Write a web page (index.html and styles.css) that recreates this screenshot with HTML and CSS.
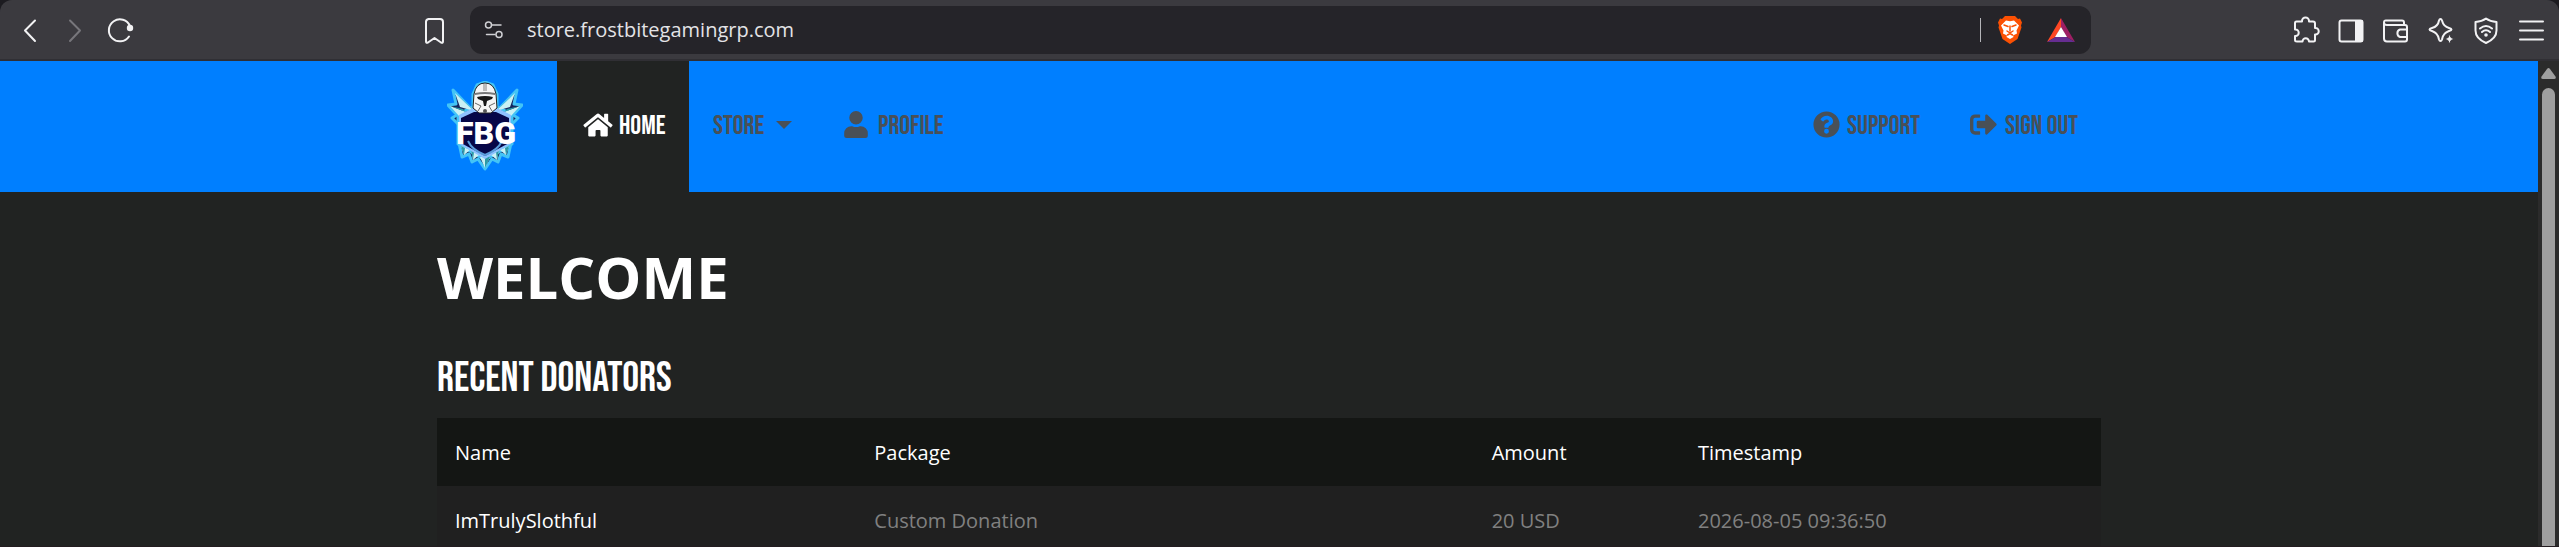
FILE: index.html
```html
<!DOCTYPE html>
<html lang="en">
<head>
<meta charset="utf-8">
<title>Frostbite Gaming Store</title>
<link rel="stylesheet" href="styles.css">
</head>
<body>
<div class="window">
<div class="toolbar">
  <div class="tools tools-left">
    <button class="tool" aria-label="Back"><svg width="28" height="28" viewBox="0 0 28 28"><path d="M19 4.500L9 14.500l10 10.500"/></svg></button>
    <button class="tool dim" aria-label="Forward"><svg width="28" height="28" viewBox="0 0 28 28"><path d="M9 4.500L19 14.500 9 25"/></svg></button>
    <button class="tool" aria-label="Reload"><svg width="28" height="28" viewBox="0 0 28 28"><path d="M23 20.500A11 11 0 1 1 24 10"/><circle cx="24" cy="12" r="3.200" fill="currentColor" stroke="none"/></svg></button>
  </div>
  <button class="tool bookmark" aria-label="Bookmark"><svg width="28" height="28" viewBox="0 0 28 28"><path d="M8.500 3H20a3 3 0 0 1 3 3v19.500q0 2-2 1l-6.500-4.500L8 26.500q-2 1-2-1V6a3 3 0 0 1 2.500-3z"/></svg></button>
  <div class="address">
    <button class="tool site" aria-label="Site settings"><svg width="20" height="20" viewBox="0 0 20 20"><circle cx="4.500" cy="5" r="3"/><path d="M8 5h9M2.500 14.500H11"/><circle cx="15" cy="14.500" r="3"/></svg></button>
    <input class="url" type="text" aria-label="Address" value="store.frostbitegamingrp.com">
    <span class="divider"></span>
    <button class="tool shield" aria-label="Shields"><svg width="24" height="28" viewBox="0 0 24 28"><path d="M7 0h10l3 3 2-.5 2 4-1 3 .5 2-4 11.500L12 28l-7.500-5L.5 11.500 1 9.500 0 6.500l2-4L4 3z" fill="#fb5003" stroke="none"/><path d="M8 4.500l4 .8 4-.8 5 5-2.500 5 .5 3-4 2 .5 1.500L12 23l-3.500-2 .5-1.500-4-2 .5-3L3 9.500z" fill="#fff" stroke="none"/><path d="M6 9l4 1.500M18 9l-4 1.500M12 10v5M9 15l3 2 3-2M9.500 19l2.500-1.500 2.500 1.500" stroke="#fb5003" stroke-width="1.500"/></svg></button>
    <button class="tool rewards" aria-label="Rewards"><svg width="28" height="24" viewBox="0 0 28 24"><g stroke="none"><path d="M14 0L0 24l8.500-5L14 9z" fill="#ff4724"/><path d="M14 0l14 24-8.500-5L14 9z" fill="#9e1f63"/><path d="M0 24h28l-8.500-5h-11z" fill="#662d91"/><path d="M14 9l6 10H8z" fill="#fff"/></g></svg></button>
  </div>
  <div class="tools tools-right">
    <button class="tool" aria-label="Extensions"><svg width="28" height="28" viewBox="0 0 28 28"><path d="M3 7q0-1.500 1.500-1.500H10V5a3.500 3.500 0 0 1 7 0v.5h4q2 0 2 2V12h.500a3.200 3.200 0 0 1 0 6.500H23V24q0 1.500-1.500 1.500H17a3.200 3.200 0 0 0-6.500 0H5Q3 25.500 3 24v-4h.5a3.200 3.200 0 0 0 0-6.500H3z"/></svg></button>
    <button class="tool" aria-label="Sidebar"><svg width="28" height="28" viewBox="0 0 28 28"><rect x="2.500" y="4.500" width="23" height="21" rx="2"/><path d="M19 5h6v20h-6z" fill="currentColor"/></svg></button>
    <button class="tool" aria-label="Wallet"><svg width="28" height="28" viewBox="0 0 28 28"><path d="M2 6.500v16q0 3 3 3h18q2 0 2-2V11q0-2-2-2H5Q2 9 2 6.500T4.500 4.500H20q2 0 2 2V9M25 13.500h-7a4 4 0 0 0 0 7.500h7"/></svg></button>
    <button class="tool" aria-label="Assistant"><svg width="28" height="28" viewBox="0 0 28 28"><path d="M13.500 3q1 0 1.500 1.500Q16.500 10.500 22 12q2.500.700 2.500 1.500T22 15q-6 2-7 8.500Q14.500 25 13.500 25T12 23.500Q11 17 5 15q-2.500-.700-2.500-1.500T5 12q6-1.500 7-7.500Q12.500 3 13.500 3z"/><path d="M22.500 18l1.500 3.500 3.500 1.500-3.500 1.500-1.500 3.500-1.500-3.500-3.500-1.500 3.500-1.500z" fill="currentColor" stroke="#3b3a3f" stroke-width="1"/></svg></button>
    <button class="tool" aria-label="VPN"><svg width="28" height="28" viewBox="0 0 28 28"><path d="M14 2.500q4 3 10.500 3.500v8.500q0 8-10.500 12.500Q3.500 22.500 3.500 14.500V6Q10 5.500 14 2.500zM8 12.500q6-5 12 0M10 16q4-3.500 8 0"/><circle cx="14" cy="19" r="1.800" fill="currentColor" stroke="none"/></svg></button>
    <button class="tool" aria-label="Menu"><svg width="28" height="28" viewBox="0 0 28 28"><path d="M3 5.500h23M3 14.500h23M3 23.500h23"/></svg></button>
  </div>
</div>
<div class="viewport">
<div class="page">
  <header class="header">
    <nav class="container nav">
      <a class="brand" href="#" aria-label="FBG">
        <svg width="76" height="90" viewBox="0 0 76 90">
          <g stroke="#43c4f6" stroke-width="3" stroke-linejoin="round" fill="#14265e"><path d="M28 32L6 9l3 14-8 1 9 10-5 3 8 8 16-4zM48 32L70 9l-3 14 8 1-9 10 5 3-8 8-16-4zM12 62l3 14 7-3 3 8 6-3 7 10 7-10 6 3 3-8 7 3 3-14z"/><path d="M38 1l8 3 4 9v18H26V13l4-9zM11 33l15-7h24l15 7v30L38 79 11 63z"/></g>
          <path d="M27 30L8 12l5 14zM19 31L3 25l9 10zM49 30L68 12l-5 14zM57 31l16-6-9 10zM14 65l3 9 6-5zM24 69l2 10 6-5zM33 76l5 11 5-11zM62 65l-3 9-6-5zM52 69l-2 10-6-5z" fill="#c9f1f4"/>
          <path d="M27 30L8 12l13 12zM19 31L3 25l13 3zM49 30L68 12 55 24zM57 31l16-6-13 3zM14 65l3 9 1-7zM24 69l2 10 1-8zM38 76v11l5-11zM62 65l-3 9-1-7zM52 69l-2 10-1-8z" fill="#2b9aa6"/>
          <path d="M12 34l14-7h24l14 7v29L38 78 12 63z" fill="#8ec2ff"/>
          <path d="M14 37l13-6h22l13 6v25L38 75 14 62z" fill="#070747"/>
          <path d="M21 60q4 9 17 14 13-5 17-14" fill="none" stroke="#5b9edc" stroke-width="2"/>
          <path d="M27 13Q29 2 38 2t11 11l1 14-6 5H32l-6-5z" fill="#f5f5f5" stroke="#222" stroke-width="1"/>
          <path d="M36 3h4v7h-4z" fill="#bbb"/>
          <path d="M28 12q10-2 20 0v2q-10-2-20 0z" fill="#777"/>
          <path d="M30 16q8-2 16 0l-1 2-5 2-1 5h-2l-1-5-5-2z" fill="#171717"/>
          <path d="M28 22l6 3-3 5M48 22l-6 3 3 5" fill="none" stroke="#666"/><circle cx="38" cy="30" r="2" fill="#555"/>
          <text x="39" y="63" class="brand-text" text-anchor="middle">FBG</text>
        </svg>
      </a>
      <a class="link active" href="#"><svg width="30" height="26" viewBox="0 0 576 512"><path d="M280 148L96 300v164a16 16 0 0 0 16 16h112a16 16 0 0 0 16-16v-96a16 16 0 0 1 16-16h64a16 16 0 0 1 16 16v96a16 16 0 0 0 16 16h112a16 16 0 0 0 16-16V300L296 148a12 12 0 0 0-16 0zM572 251l-84-69V44a12 12 0 0 0-12-12h-56a12 12 0 0 0-12 12v72l-89-74a48 48 0 0 0-61 0L4 251a12 12 0 0 0-2 17l26 31a12 12 0 0 0 17 2l235-194a12 12 0 0 1 15 0l235 194a12 12 0 0 0 17-2l26-31a12 12 0 0 0-1-17z"/></svg><span>Home</span></a>
      <a class="link store" href="#"><span>Store</span><i class="caret"></i></a>
      <a class="link profile" href="#"><svg width="24" height="27" viewBox="0 0 448 512"><path d="M224 256a128 128 0 1 0 0-256 128 128 0 0 0 0 256zm90 32h-17a174 174 0 0 1-146 0h-17A134 134 0 0 0 0 422v42a48 48 0 0 0 48 48h352a48 48 0 0 0 48-48v-42a134 134 0 0 0-134-134z"/></svg><span>Profile</span></a>
      <a class="link support" href="#"><svg width="27" height="27" viewBox="0 0 512 512"><path fill-rule="evenodd" d="M504 256a248 248 0 1 1-496 0 248 248 0 0 1 496 0zM262 90c-54 0-89 23-116 64a12 12 0 0 0 3 16l34 26a12 12 0 0 0 17-2c18-22 30-35 57-35 20 0 45 13 45 33 0 15-12 22-32 33-24 14-55 30-55 72v7a12 12 0 0 0 12 12h57a12 12 0 0 0 12-12v-4c0-29 85-30 85-108 0-59-61-102-119-102zm-6 248a46 46 0 1 0 0 92 46 46 0 0 0 0-92z"/></svg><span>Support</span></a>
      <a class="link signout" href="#"><svg width="27" height="27" viewBox="0 0 512 512"><path d="M497 273L329 441c-15 15-41 4.500-41-17v-96H152a24 24 0 0 1-24-24v-96a24 24 0 0 1 24-24h136V88c0-21 26-32 41-17l168 168a24 24 0 0 1 0 34zM192 436v-40a12 12 0 0 0-12-12H96a32 32 0 0 1-32-32V160a32 32 0 0 1 32-32h84a12 12 0 0 0 12-12V76a12 12 0 0 0-12-12H96a96 96 0 0 0-96 96v192a96 96 0 0 0 96 96h84a12 12 0 0 0 12-12z"/></svg><span>Sign out</span></a>
    </nav>
  </header>
  <main class="container">
    <h1 class="title">WELCOME</h1>
    <h2 class="subtitle">Recent Donators</h2>
    <table class="donators">
      <thead><tr><th class="c-name">Name</th><th class="c-package">Package</th><th class="c-amount">Amount</th><th>Timestamp</th></tr></thead>
      <tbody><tr><td class="name">ImTrulySlothful</td><td>Custom Donation</td><td>20 USD</td><td>2026-08-05 09:36:50</td></tr></tbody>
    </table>
  </main>
</div>
<div class="scrollbar"><svg width="15" height="11" viewBox="0 0 15 11"><path d="M6 1q1.500-2 3 0l5.500 7.500Q15.500 11 13 11H2Q-.5 11 .5 8.500z"/></svg><div class="thumb"></div></div>
</div>
</div>
</body>
</html>
```
FILE: styles.css
```css
* { box-sizing: border-box; }
body { margin: 0; background: #212322; color: #fff; font-family: "Segoe UI", "Open Sans", "Noto Sans", sans-serif; }
.window { display: flex; flex-direction: column; height: 100vh; overflow: hidden; background: #1c1b20; border-bottom: 1px solid #231c20; }
.toolbar { display: flex; align-items: center; flex: none; height: 61px; padding: 0 14px 0 16px; background: #3b3a3f; border-bottom: 2px solid #302f34; border-radius: 12px 12px 0 0; color: #f2f2f4; }
.tool { display: block; flex: none; padding: 0; border: 0; background: none; color: inherit; line-height: 0; }
.tool svg { fill: none; stroke: currentColor; stroke-width: 2; stroke-linecap: round; stroke-linejoin: round; }
.dim { color: #77767b; }
.tools { display: flex; align-items: center; gap: 17px; }
.tools-left { width: 404px; }
.bookmark { margin-right: 22px; }
.address { display: flex; align-items: center; flex: none; width: 64.1%; max-width: 1621px; height: 48px; padding: 0 16px 0 14px; border-radius: 12px; background: #252429; color: #d0d0d4; }
.site { margin-right: 23px; }
.site svg { stroke-width: 1.500; }
.url { flex: 1; min-width: 0; padding: 0; border: 0; outline: 0; background: none; color: #e3e3e6; font: 20px "Segoe UI", "Open Sans", "Noto Sans", sans-serif; }
.divider { width: 1px; height: 24px; background: #b5b5b9; }
.shield { margin: 0 25px 0 17px; }
.tools-right { margin-left: auto; }
.viewport { display: flex; flex: 1; min-height: 0; }
.page { flex: 1; min-width: 0; overflow: hidden; background: #212322; }
.container { width: calc(100% - 60px); max-width: 1664px; margin: 0 auto; }
.header { background: #007fff; }
.nav { display: flex; align-items: stretch; height: 131px; }
.brand { width: 120px; padding: 20px 0 0 10px; }
.brand-text { font: 900 32px Roboto, sans-serif; fill: #fff; }
.link { display: flex; align-items: center; gap: 6px; padding: 0 24px 4px 26px; color: #495057; font: 27px "Bebas Neue", "Roboto Condensed", "Liberation Sans Narrow", sans-serif; text-decoration: none; text-transform: uppercase; white-space: nowrap; }
.link svg { flex: none; fill: currentColor; }
.link span { padding-top: 2px; }
.active { width: 132px; background: #212322; color: #fff; }
.store { width: 129px; padding-left: 24px; gap: 12px; }
.profile { gap: 10px; }
.caret { border: 8px solid transparent; border-top-color: currentColor; border-bottom: 0; }
.support { width: 157px; margin-left: auto; gap: 7px; }
.signout { width: 157px; gap: 8px; }
.title { margin: 45px 0 0; font-size: 58px; line-height: 80px; font-weight: bold; }
.subtitle { margin: 36px 0 13px; font: 42px/52px "Bebas Neue", "Roboto Condensed", "Liberation Sans Narrow", sans-serif; text-transform: uppercase; }
.donators { width: 100%; border-collapse: collapse; table-layout: fixed; font-size: 20px; line-height: 32px; }
.donators th, .donators td { padding: 19px 18px 17px; text-align: left; font-weight: normal; }
.donators thead { background: #141614; }
.donators tbody { background: #202020; color: #808080; }
.donators .name { color: #fff; }
.c-name { width: 25.2%; }
.c-package { width: 37.1%; }
.c-amount { width: 12.4%; }
.scrollbar { display: flex; flex-direction: column; align-items: center; gap: 9px; flex: none; width: 21px; padding-top: 7px; background: #2b2b2b; }
.scrollbar svg { fill: #9f9f9f; flex: none; }
.thumb { flex: 1; width: 13px; border-radius: 7px 7px 0 0; background: #9f9f9f; }
```
